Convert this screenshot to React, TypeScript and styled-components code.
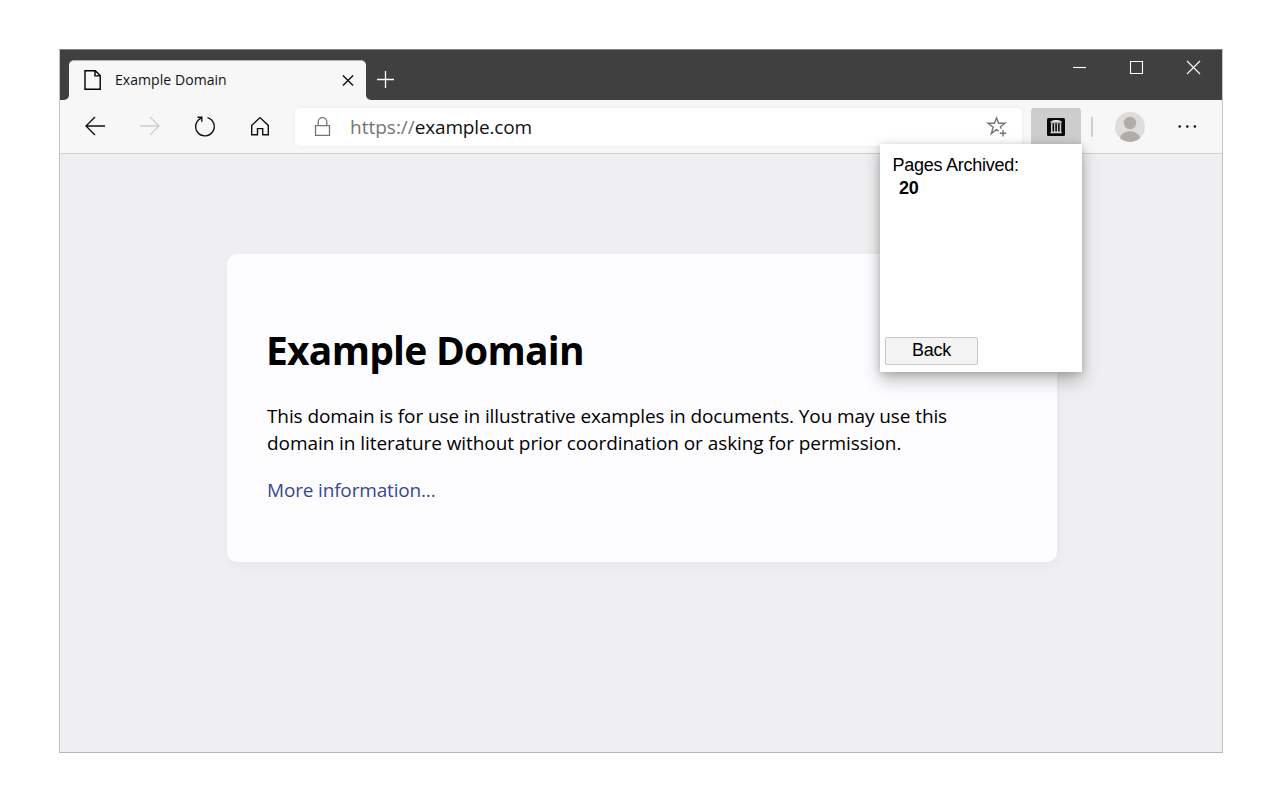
import React from "react";
import styled, { createGlobalStyle } from "styled-components";

const uiFont = `"Open Sans", "Noto Sans", sans-serif`;
const dark = "#404040";
const light = "#f7f7f7";

const GlobalStyle = createGlobalStyle`
  * { box-sizing: border-box; }
  body { margin: 0; background: #fff; }
  button { font: inherit; color: inherit; background: none; border: 0; padding: 0; }
  svg { display: block; }
`;

const Page = styled.main`
  width: 1280px;
  height: 800px;
  padding: 49px 57px 47px 59px;
  overflow: hidden;
`;

const BrowserWindow = styled.div`
  width: 1164px;
  height: 704px;
  display: flex;
  flex-direction: column;
  border: 1px solid #c4c4c4;
  border-top-color: #808080;
  border-bottom-color: #b6b6b6;
`;

const TitleBar = styled.header`
  height: 50px;
  flex: none;
  display: flex;
  background: linear-gradient(${dark} 30px, ${light} 30px);
`;

const TitleEdge = styled.div`
  width: 9px;
  background: ${dark};
  border-bottom-right-radius: 5px;
`;

const Tab = styled.div`
  width: 297px;
  height: 40px;
  margin-top: 10px;
  padding: 0 10px 1px 12px;
  display: flex;
  align-items: center;
  background: ${light};
  border-top: 1px solid #b0b0b0;
  border-radius: 5px 5px 0 0;
`;

const TabTitle = styled.span`
  flex: 1;
  margin-left: 10px;
  padding-bottom: 1px;
  font: 400 14px/20px ${uiFont};
  letter-spacing: 0.06px;
  color: #111;
`;

const TitleRest = styled.div`
  flex: 1;
  display: flex;
  justify-content: space-between;
  padding: 17px 16px 0 7px;
  background: ${dark};
  border-bottom-left-radius: 5px;
`;

const NewTab = styled.button`
  width: 24px;
  height: 24px;
`;

const WindowControls = styled.div`
  display: flex;
  gap: 33px;
  margin-top: -12px;
`;

const Toolbar = styled.nav`
  height: 54px;
  flex: none;
  display: flex;
  align-items: center;
  padding-left: 11px;
  background: ${light};
  border-bottom: 1px solid #cfcfcf;
`;

const NavButtons = styled.div`
  display: flex;
  gap: 7px;
`;

const NavButton = styled.button<{ $muted?: boolean }>`
  width: 48px;
  height: 40px;
  display: flex;
  align-items: center;
  justify-content: center;
  color: ${(p) => (p.$muted ? "#cfcfcf" : "#111")};
`;

const AddressBar = styled.div`
  width: 727px;
  height: 38px;
  margin-left: 11px;
  padding: 0 13px 0 15px;
  display: flex;
  align-items: center;
  background: #fff;
  border-radius: 5px;
  color: #757575;
  box-shadow: 0 0 4px rgba(0, 0, 0, 0.06);
`;

const Url = styled.span`
  flex: 1;
  margin-left: 16px;
  font: 400 19px/28px ${uiFont};
  color: #757575;
`;

const Host = styled.span`
  letter-spacing: -0.18px;
  color: #111;
`;

const ExtensionSlot = styled.div`
  position: relative;
  width: 50px;
  height: 38px;
  margin-left: 9px;
`;

const ExtensionButton = styled.button`
  width: 50px;
  height: 38px;
  display: flex;
  align-items: center;
  justify-content: center;
  background: #cdcdcd;
  border-radius: 3px 3px 0 0;
`;

const Divider = styled.div`
  width: 2px;
  height: 20px;
  margin: 0 22px 0 10px;
  background: #cecece;
`;

const MoreButton = styled.button`
  margin-left: 30px;
`;

const Popup = styled.section`
  position: absolute;
  top: 36px;
  right: -1px;
  width: 202px;
  height: 228px;
  padding: 10px 5px 7px;
  display: flex;
  flex-direction: column;
  justify-content: space-between;
  background: #fff;
  box-shadow: 0 8px 16px rgba(0, 0, 0, 0.27), 0 1px 7px rgba(0, 0, 0, 0.16);
  font: 18px/23px "Liberation Sans", Arial, sans-serif;
  color: #000;
  z-index: 2;
`;

const Stat = styled.div`
  padding-left: 7.5px;
  letter-spacing: -0.25px;
`;

const Count = styled.strong`
  display: block;
  padding-left: 6.5px;
  letter-spacing: -0.2px;
`;

const BackButton = styled.button`
  width: 93px;
  height: 28px;
  padding-bottom: 2px;
  background: #f4f4f4;
  border: 1px solid #c6c6c6;
  border-radius: 2px;
  line-height: 22px;
  letter-spacing: -0.2px;
`;

const Viewport = styled.div`
  flex: 1;
  padding: 100px 165px 0 167px;
  background: #efeff1;
`;

const Card = styled.article`
  width: 830px;
  height: 308px;
  padding: 69px 40px 0;
  background: #fdfdff;
  border-radius: 10px;
  box-shadow: 2px 4px 9px 2px rgba(0, 0, 0, 0.025);
  font-family: ${uiFont};
  color: #000;
`;

const Heading = styled.h1`
  margin: 0 0 26px -1px;
  font-size: 39px;
  line-height: 54px;
  font-weight: 700;
  letter-spacing: -0.76px;
`;

const Paragraph = styled.p`
  margin: 0 0 20px;
  font-size: 19px;
  line-height: 27px;
`;

const Line = styled.span<{ $tracking: number }>`
  display: block;
  white-space: nowrap;
  letter-spacing: ${(p) => p.$tracking}px;
`;

const MoreLink = styled.a`
  font-size: 19px;
  line-height: 27px;
  letter-spacing: -0.17px;
  color: #38488f;
`;

const Stroke = ({ width = 1.4, d }: { width?: number; d: string }) => (
  <svg width="24" height="24" viewBox="0 0 24 24" fill="none" stroke="currentColor" strokeWidth={width}>
    <path d={d} />
  </svg>
);

const ArchiveIcon = () => (
  <svg width="18" height="18" viewBox="0 0 18 18">
    <rect width="18" height="18" rx="1.5" fill="#080808" />
    <path d="M3.4 4.8V3.8C5 2.4 7 2 9.1 2s4.2.4 5.8 1.8v1z" fill="#dedede" />
    <path d="M4 5.2h10.2v9H4zM3.5 14h11.2v1.2H3.5z" fill="#d4d4d4" />
    <path d="M6.3 5.6v7.8M9.1 5.6v7.8M11.9 5.6v7.8" stroke="#080808" strokeWidth="1.6" />
  </svg>
);

const Avatar = () => (
  <svg width="30" height="30" viewBox="0 0 30 30">
    <clipPath id="avatar-clip">
      <circle cx="15" cy="15" r="15" />
    </clipPath>
    <g clipPath="url(#avatar-clip)">
      <rect width="30" height="30" fill="#dedddc" />
      <circle cx="15" cy="11" r="6.2" fill="#b0ada9" />
      <ellipse cx="15" cy="27.5" rx="10.5" ry="8.2" fill="#b0ada9" />
    </g>
  </svg>
);

export default function App() {
  return (
    <Page>
      <GlobalStyle />
      <BrowserWindow>
        <TitleBar>
          <TitleEdge />
          <Tab>
            <Stroke d="M4 2.7h10.3L19.2 7.6V21.3H4zM14 2.7v5.2h5.2" />
            <TabTitle>Example Domain</TabTitle>
            <svg width="16" height="16" viewBox="0 0 16 16" stroke="#111" strokeWidth="1.4">
              <path d="M2.9 3.4l10.2 10.2M13.1 3.4L2.9 13.6" />
            </svg>
          </Tab>
          <TitleRest>
            <NewTab aria-label="New tab">
              <svg width="24" height="24" viewBox="0 0 24 24" stroke="#fff" strokeWidth="1.3">
                <path d="M4 12.5h17M12.5 4v17" />
              </svg>
            </NewTab>
            <WindowControls>
              {["M5 12.5h13", "M5.5 6.5h12v12h-12z", "M5 6l13 13M18 6L5 19"].map((d) => (
                <svg key={d} width="24" height="24" viewBox="0 0 24 24" fill="none" stroke="#fff" strokeWidth="1.1">
                  <path d={d} />
                </svg>
              ))}
            </WindowControls>
          </TitleRest>
        </TitleBar>
        <Toolbar>
          <NavButtons>
            <NavButton aria-label="Back">
              <Stroke d="M22 11H3M12 2L3 11l9 9" />
            </NavButton>
            <NavButton aria-label="Forward" $muted>
              <Stroke d="M2 11h19M12 2l9 9-9 9" />
            </NavButton>
            <NavButton aria-label="Refresh">
              <Stroke d="M14.5 2.6A9.3 9.3 0 1 1 8.8 2.8M4.5 2.2h4.3v4.5" />
            </NavButton>
            <NavButton aria-label="Home">
              <Stroke d="M3.7 10.4L12 2.6l8.3 7.8v9.4h-5.6v-6.2H9.5v6.2H3.7z" />
            </NavButton>
          </NavButtons>
          <AddressBar>
            <Stroke d="M5.5 10.7h14v9.6h-14zM8.2 10.5V7a4.3 4.3 0 0 1 8.6 0v3.5" width={1.3} />
            <Url>
              https://<Host>example.com</Host>
            </Url>
            <Stroke d="M13.6 15.9L11.5 14.7l-5.2 3.9 1.9-6.3-5.2-4h6.4l2.1-5.4 2.1 5.4h6.4l-4.6 3.5 1 2M18 15.1v6.4M14.8 18.3h6.4" />
          </AddressBar>
          <ExtensionSlot>
            <ExtensionButton aria-label="Archive">
              <ArchiveIcon />
            </ExtensionButton>
            <Popup>
              <Stat>
                Pages Archived:
                <Count>20</Count>
              </Stat>
              <BackButton>Back</BackButton>
            </Popup>
          </ExtensionSlot>
          <Divider />
          <Avatar />
          <MoreButton aria-label="Settings">
            <svg width="24" height="24" viewBox="0 0 24 24" fill="#111">
              <circle cx="4.7" cy="11.5" r="1.3" />
              <circle cx="12.3" cy="11.5" r="1.3" />
              <circle cx="19.9" cy="11.5" r="1.3" />
            </svg>
          </MoreButton>
        </Toolbar>
        <Viewport>
          <Card>
            <Heading>Example Domain</Heading>
            <Paragraph>
              <Line $tracking={-0.1}>This domain is for use in illustrative examples in documents. You may use this</Line>
              <Line $tracking={-0.07}>domain in literature without prior coordination or asking for permission.</Line>
            </Paragraph>
            <MoreLink>More information...</MoreLink>
          </Card>
        </Viewport>
      </BrowserWindow>
    </Page>
  );
}
